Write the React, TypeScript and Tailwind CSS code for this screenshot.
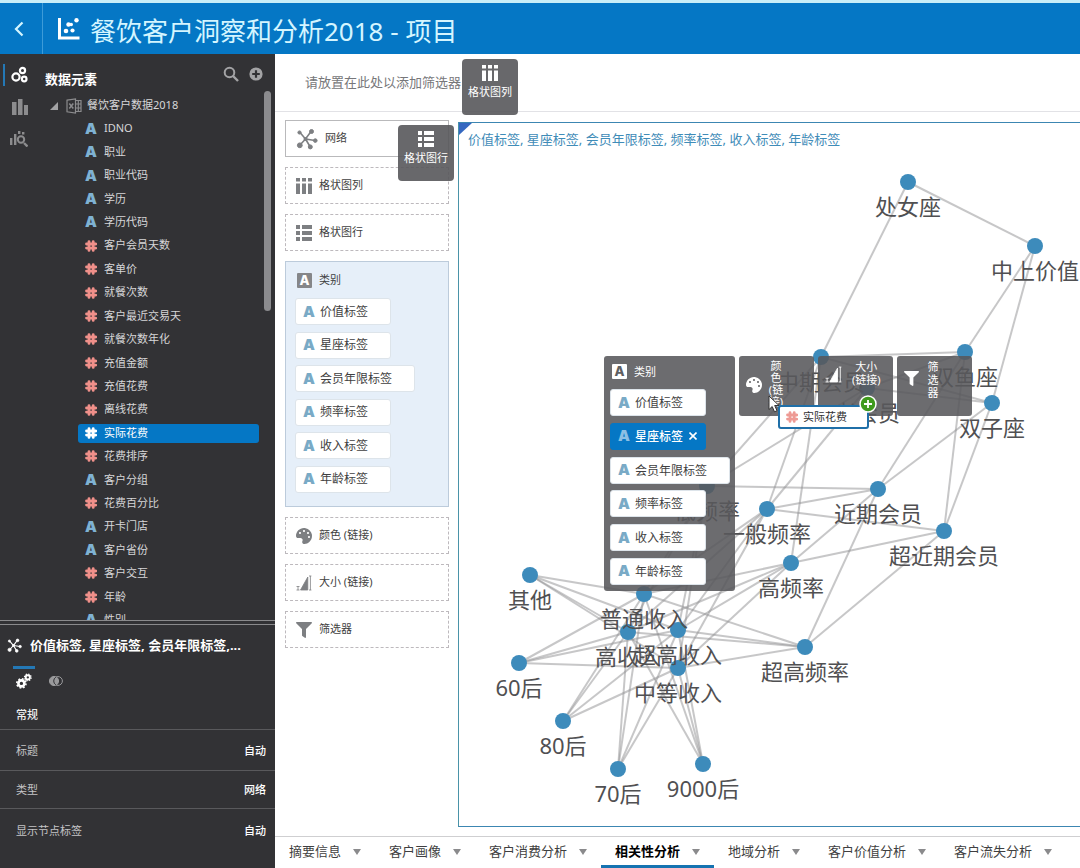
import { useState } from 'react'
import type { ReactNode } from 'react'
import { FaFilter, FaPalette } from 'react-icons/fa'

type FieldKind = 'text' | 'number'

interface Field {
  name: string
  kind: FieldKind
}

interface GraphNode {
  name: string
  x: number
  y: number
}

const FIELDS: Field[] = [
  { name: 'IDNO', kind: 'text' },
  { name: '职业', kind: 'text' },
  { name: '职业代码', kind: 'text' },
  { name: '学历', kind: 'text' },
  { name: '学历代码', kind: 'text' },
  { name: '客户会员天数', kind: 'number' },
  { name: '客单价', kind: 'number' },
  { name: '就餐次数', kind: 'number' },
  { name: '客户最近交易天', kind: 'number' },
  { name: '就餐次数年化', kind: 'number' },
  { name: '充值金额', kind: 'number' },
  { name: '充值花费', kind: 'number' },
  { name: '离线花费', kind: 'number' },
  { name: '实际花费', kind: 'number' },
  { name: '花费排序', kind: 'number' },
  { name: '客户分组', kind: 'text' },
  { name: '花费百分比', kind: 'number' },
  { name: '开卡门店', kind: 'text' },
  { name: '客户省份', kind: 'text' },
  { name: '客户交互', kind: 'number' },
  { name: '年龄', kind: 'number' },
  { name: '性别', kind: 'text' },
]

const LABELS = ['价值标签', '星座标签', '会员年限标签', '频率标签', '收入标签', '年龄标签']

const TABS = ['摘要信息', '客户画像', '客户消费分析', '相关性分析', '地域分析', '客户价值分析', '客户流失分析']

const SETTINGS = [
  { label: '标题', value: '自动', size: 'h-[41px]' },
  { label: '类型', value: '网络', size: 'h-[38px]' },
  { label: '显示节点标签', value: '自动', size: 'h-[42px]' },
]

const NODES: GraphNode[] = [
  { name: '处女座', x: 449, y: 59 },
  { name: '中上价值', x: 576, y: 123 },
  { name: '中期会员', x: 362, y: 234 },
  { name: '双鱼座', x: 506, y: 229 },
  { name: '老会员', x: 408, y: 265 },
  { name: '双子座', x: 533, y: 280 },
  { name: '低频率', x: 248, y: 363 },
  { name: '近期会员', x: 419, y: 366 },
  { name: '一般频率', x: 308, y: 386 },
  { name: '超近期会员', x: 485, y: 408 },
  { name: '高频率', x: 332, y: 440 },
  { name: '其他', x: 71, y: 452 },
  { name: '普通收入', x: 185, y: 471 },
  { name: '高收入', x: 169, y: 509 },
  { name: '超高收入', x: 219, y: 507 },
  { name: '中等收入', x: 219, y: 545 },
  { name: '超高频率', x: 346, y: 524 },
  { name: '60后', x: 60, y: 540 },
  { name: '80后', x: 104, y: 598 },
  { name: '70后', x: 159, y: 646 },
  { name: '9000后', x: 244, y: 641 },
]

// 每个节点连接到的其他节点
const INCOMES = ['普通收入', '高收入', '超高收入', '中等收入']
const LINKS: Record<string, string[]> = {
  处女座: ['中上价值', '中期会员'],
  中上价值: ['双鱼座', '双子座'],
  双鱼座: ['中期会员', '老会员', '近期会员', '超近期会员'],
  双子座: ['中期会员', '老会员', '近期会员', '超近期会员'],
  中期会员: ['低频率', '一般频率', '高频率'],
  老会员: ['低频率', '一般频率'],
  近期会员: ['低频率', '一般频率', '高频率', '超高频率'],
  超近期会员: ['一般频率', '高频率', '超高频率'],
  低频率: INCOMES,
  一般频率: INCOMES,
  高频率: INCOMES,
  超高频率: INCOMES,
  其他: INCOMES,
  '60后': INCOMES,
  '80后': INCOMES,
  '70后': INCOMES,
  '9000后': INCOMES,
}

function HashIcon({ className }: { className: string }) {
  return (
    <svg viewBox="0 0 12 12" className={`size-3 shrink-0 ${className}`} stroke="currentColor" strokeWidth="2.8" strokeLinecap="round" fill="none">
      <path d="M4 1.6V10.4M8.2 1.6V10.4M1.5 4H10.7M1.5 8.1H10.7" />
    </svg>
  )
}

function LetterIcon({ className }: { className: string }) {
  return (
    <span aria-hidden="true" className={`w-3 shrink-0 text-center font-[Inter,sans-serif] text-[15px] leading-4 font-black ${className}`}>A</span>
  )
}

function BoxedLetter({ className }: { className: string }) {
  return (
    <span aria-hidden="true" className={`flex size-[15px] shrink-0 items-center justify-center rounded-[1px] font-[Inter,sans-serif] text-[13px] leading-none font-extrabold ${className}`}>A</span>
  )
}

function NetworkIcon({ className }: { className: string }) {
  return (
    <svg viewBox="0 0 22 22" className={className} stroke="currentColor" fill="currentColor">
      <path d="M4 4.5 9.5 11 15 3.5M9.5 11 19 12.5M9.5 11 4 17M9.5 11 14 18.5" fill="none" strokeWidth="1.6" />
      <circle cx="3.5" cy="4.5" r="1.6" />
      <circle cx="15.5" cy="3.5" r="2" />
      <circle cx="19.3" cy="12.6" r="1.8" />
      <circle cx="3.8" cy="17.3" r="2.4" />
      <circle cx="14.3" cy="18.9" r="2" />
      <circle cx="9.5" cy="11" r="1.5" />
    </svg>
  )
}

function TrellisColumnsIcon({ className }: { className: string }) {
  return (
    <svg viewBox="0 0 16 16" className={className} fill="currentColor">
      <path d="M0 0h4v3.5H0zM6 0h4v3.5H6zM12 0h4v3.5h-4zM0 5.5h4V16H0zM6 5.5h4V16H6zM12 5.5h4V16h-4z" />
    </svg>
  )
}

function TrellisRowsIcon({ className }: { className: string }) {
  return (
    <svg viewBox="0 0 16 16" className={className} fill="currentColor">
      <path d="M0 0h4v4H0zM0 6h4v4H0zM0 12h4v4H0zM6 0h10v4H6zM6 6h10v4H6zM6 12h10v4H6z" />
    </svg>
  )
}

function SizeIcon({ className }: { className: string }) {
  return (
    <svg viewBox="0 0 16 16" className={className} fill="currentColor" stroke="currentColor">
      <path d="M4.5 15 11.8 2v13z" strokeWidth="0.8" />
      <path d="M0.5 11.5h3M0.5 15h3M2 11.5V15M13 1h2.4M13 15h2.4M14.4 1v14" fill="none" strokeWidth="0.8" />
    </svg>
  )
}

function GearsIcon() {
  return (
    <svg viewBox="0 0 16 16" className="size-4" fill="none" stroke="currentColor">
      <circle cx="5.4" cy="10.4" r="3" strokeWidth="2.6" />
      <circle cx="5.4" cy="10.4" r="4.6" strokeWidth="1.6" strokeDasharray="1.8 1.8" />
      <circle cx="11.8" cy="4.4" r="2.1" strokeWidth="1.9" />
      <circle cx="11.8" cy="4.4" r="3.3" strokeWidth="1.3" strokeDasharray="1.3 1.3" />
    </svg>
  )
}

function Header() {
  return (
    <header className="flex h-[54px] shrink-0 border-t-3 border-[#c9eef8] bg-[#0577c5] text-[#d4f5ff]">
      <button aria-label="返回" className="flex w-[43px] items-center justify-center border-r border-[#3d9bd8] pr-1">
        <svg viewBox="0 0 10 16" className="h-4 w-2.5" fill="none" stroke="currentColor" strokeWidth="2.2">
          <path d="M8.5 1.5 2 8l6.5 6.5" />
        </svg>
      </button>
      <div className="flex items-center gap-2.5 pl-[15px]">
        <svg viewBox="0 0 22 22" className="size-[22px] text-white" fill="currentColor">
          <path d="M0 0h3v18.5h18.5v3H0z" />
          <circle cx="8" cy="13" r="2.3" />
          <circle cx="10.5" cy="6.5" r="2.2" />
          <circle cx="14.5" cy="12.5" r="2.1" />
          <circle cx="13.2" cy="6.5" r="1.8" />
          <circle cx="18.5" cy="2.3" r="2.2" />
        </svg>
        <h1 className="pt-1 text-[26px] leading-none font-normal whitespace-nowrap">餐饮客户洞察和分析2018 - 项目</h1>
      </div>
    </header>
  )
}

function Rail() {
  return (
    <nav className="flex w-10 shrink-0 flex-col gap-2.5 pt-2.5 text-[#8c8c8e]">
      <button aria-label="数据" className="ml-[3px] flex h-[22px] items-center border-l-2 border-[#2478b5] pl-1.5 text-white">
        <svg viewBox="0 0 18 18" className="size-[18px]" fill="none" stroke="currentColor" strokeWidth="2.2">
          <circle cx="5" cy="11" r="3.6" />
          <circle cx="11.5" cy="4.5" r="2.6" />
          <circle cx="13.2" cy="13" r="2.3" />
        </svg>
      </button>
      <button aria-label="可视化" className="flex h-[22px] items-center pl-3">
        <svg viewBox="0 0 16 16" className="size-4" fill="currentColor">
          <path d="M0 3h4.5v13H0zM6 0h4.5v16H6zM12 6h4v10h-4z" />
        </svg>
      </button>
      <button aria-label="分析" className="flex h-[22px] items-center pl-2.5">
        <svg viewBox="0 0 18 16" className="h-4 w-[18px]" fill="currentColor">
          <path d="M0 7h2.4v7H0zM4 3h2.4v11H4zM8 0h2.4v3H8zM12 1h2.4v2.5H12z" />
          <circle cx="11" cy="8.5" r="3.2" fill="none" stroke="currentColor" strokeWidth="2" />
          <path d="m14 12 3.5 3.5" stroke="currentColor" strokeWidth="2.4" />
        </svg>
      </button>
    </nav>
  )
}

function DataPanel() {
  const [selected, setSelected] = useState('实际花费')

  return (
    <section className="flex min-h-0 flex-1 border-b border-[#8a8a8c]">
      <Rail />
      <div className="flex min-w-0 flex-1 flex-col">
        <div className="flex h-10 shrink-0 items-center pr-3 pl-[5px]">
          <h2 className="flex-1 pt-2.5 text-[13px] leading-4 font-bold text-white">数据元素</h2>
          <button aria-label="搜索" className="mr-2.5 text-[#a3a3a5]">
            <svg viewBox="0 0 16 16" className="size-4" fill="none" stroke="currentColor">
              <circle cx="6.5" cy="6.5" r="4.8" strokeWidth="2" />
              <path d="m10 10 5 5" strokeWidth="2.4" />
            </svg>
          </button>
          <button aria-label="添加" className="text-[#a3a3a5]">
            <svg viewBox="0 0 14 14" className="size-3.5">
              <circle cx="7" cy="7" r="6.6" fill="currentColor" />
              <path d="M7 3.2v7.6M3.2 7h7.6" stroke="#323235" strokeWidth="2.2" />
            </svg>
          </button>
        </div>
        <div className="flex min-h-0 flex-1">
          <div className="min-w-0 flex-1 overflow-hidden">
            <div className="flex h-[23px] items-center pl-2.5 text-[11px] text-[#d6d6d8]">
              <svg viewBox="0 0 8 8" className="size-2" fill="#a3a3a5">
                <path d="M8 0v8H0z" />
              </svg>
              <svg viewBox="0 0 16 16" className="ml-2 mr-[5px] size-4" fill="none" stroke="#8c8c8e" strokeWidth="1.2">
                <path d="M1 2.2 9.5 1v14L1 13.8zM9.5 2.5H15v11H9.5M9.5 6H15M9.5 10H15M12.3 2.5v11" />
                <path d="m3.3 5.5 4 5M7.3 5.5l-4 5" strokeWidth="1.5" />
              </svg>
              餐饮客户数据2018
            </div>
            <ul className="grid h-[515px] auto-rows-fr pl-[38px]">
              {FIELDS.map((field) => {
                const active = field.name === selected
                return (
                  <li key={field.name} className="flex items-center">
                    <button
                      onClick={() => setSelected(field.name)}
                      className={`flex h-[19px] w-full items-center gap-[7px] rounded-[3px] pl-[7px] text-[11px] ${active ? 'bg-[#0577c5] text-white' : 'text-[#d6d6d8]'}`}
                    >
                      {field.kind === 'text' ? (
                        <LetterIcon className="text-[#7fb2d3]" />
                      ) : (
                        <HashIcon className={active ? 'text-white' : 'text-[#f0908a]'} />
                      )}
                      {field.name}
                    </button>
                  </li>
                )
              })}
            </ul>
          </div>
          <div className="w-4 shrink-0 pl-[5px]">
            <div className="mt-[-3px] h-[220px] w-[7px] rounded-full bg-[#8b8b8e]" />
          </div>
        </div>
      </div>
    </section>
  )
}

function PropertyPanel() {
  return (
    <section className="mt-[3px] h-[244px] shrink-0 border-t border-[#8a8a8c]">
      <div className="flex h-[41px] items-center gap-2 pl-[7px] text-white">
        <NetworkIcon className="size-[15px]" />
        <h2 className="text-[13px] font-bold whitespace-nowrap">价值标签, 星座标签, 会员年限标签,...</h2>
      </div>
      <div className="flex h-[26px] gap-2.5 pl-[13px]">
        <button aria-label="常规设置" className="flex w-[22px] items-center justify-center border-t-3 border-[#2478b5] text-white">
          <GearsIcon />
        </button>
        <button aria-label="混合设置" className="flex w-[22px] items-center justify-center pt-[3px] text-[#9a9a9c]">
          <svg viewBox="0 0 14 12" className="h-3 w-3.5" fill="none" stroke="currentColor">
            <circle cx="5" cy="6" r="4.6" fill="currentColor" />
            <circle cx="9" cy="6" r="4.4" />
            <path d="M6.8 2.2a4.5 4.5 0 0 0 0 7.6" stroke="#323235" />
          </svg>
        </button>
      </div>
      <h3 className="flex h-[38px] items-center border-b border-[#59595c] px-4 pt-2.5 text-[11px] font-medium text-[#efeff0]">常规</h3>
      <dl className="divide-y divide-[#59595c] text-[11px]">
        {SETTINGS.map((item) => (
          <div key={item.label} className={`flex items-center justify-between pt-0.5 pr-[9px] pl-4 ${item.size}`}>
            <dt className="text-[#c4c4c6]">{item.label}</dt>
            <dd className="font-medium text-white">{item.value}</dd>
          </div>
        ))}
      </dl>
    </section>
  )
}

function DropZone({ icon, label, solid }: { icon: ReactNode; label: string; solid?: boolean }) {
  return (
    <div className={`flex h-[37px] shrink-0 items-center gap-[7px] border pl-2.5 text-[11px] text-[#3f3f41] ${solid ? 'border-[#b9b9bb]' : 'border-dashed border-[#bdb9bd]'}`}>
      {icon}
      {label}
    </div>
  )
}

function Chip({ label, active }: { label: string; active?: boolean }) {
  return (
    <li
      className={`flex h-[27px] items-center gap-[5px] rounded-[3px] border pl-[7px] text-[12px] whitespace-nowrap ${
        active ? 'border-[#0577c5] bg-[#0577c5] pr-2 font-medium text-white' : 'border-[#dde4ea] bg-white pr-[22px] text-[#3f3f41]'
      }`}
    >
      <LetterIcon className={active ? 'text-[#8cc0e4]' : 'text-[#79aac6]'} />
      {label}
      {active && (
        <button aria-label="移除" className="ml-px">
          <svg viewBox="0 0 8 8" className="size-2" stroke="currentColor" strokeWidth="1.6">
            <path d="m0.5 0.5 7 7M7.5 0.5l-7 7" />
          </svg>
        </button>
      )}
    </li>
  )
}

function GrammarPanel() {
  return (
    <section className="flex w-[183px] shrink-0 flex-col gap-2.5 pt-2 pr-[9px] pl-2.5">
      <DropZone solid icon={<NetworkIcon className="size-[22px] text-[#7d7f82]" />} label="网络" />
      <DropZone icon={<TrellisColumnsIcon className="size-4 text-[#7d7f82]" />} label="格状图列" />
      <DropZone icon={<TrellisRowsIcon className="size-4 text-[#7d7f82]" />} label="格状图行" />
      <div className="h-[246px] shrink-0 border border-[#bccbdb] bg-[#e6eff9] px-[9px]">
        <h3 className="flex h-9 items-center gap-[7px] pl-0.5 text-[11px] text-[#3f3f41]">
          <BoxedLetter className="bg-[#858689] text-white" />
          类别
        </h3>
        <ul className="flex h-[195px] flex-col items-start justify-between">
          {LABELS.map((label) => <Chip key={label} label={label} />)}
        </ul>
      </div>
      <DropZone icon={<FaPalette className="size-4 -scale-x-100 text-[#7d7f82]" />} label="颜色 (链接)" />
      <DropZone icon={<SizeIcon className="size-4 text-[#7d7f82]" />} label="大小 (链接)" />
      <DropZone icon={<FaFilter className="size-4 text-[#7d7f82]" />} label="筛选器" />
    </section>
  )
}

function NetworkChart() {
  const find = (name: string) => NODES.find((node) => node.name === name)!

  return (
    <svg className="absolute inset-0 h-full w-full">
      <g stroke="#8f8f91" strokeOpacity="0.5" strokeWidth="2">
        {Object.entries(LINKS).map(([from, targets]) =>
          targets.map((to) => (
            <line key={from + to} x1={find(from).x} y1={find(from).y} x2={find(to).x} y2={find(to).y} />
          ))
        )}
      </g>
      <g fill="#3d8bbb">
        {NODES.map((node) => <circle key={node.name} cx={node.x} cy={node.y} r="8" />)}
      </g>
      <g fill="#505052" fontSize="22" textAnchor="middle">
        {NODES.map((node) => <text key={node.name} x={node.x} y={node.y + 33}>{node.name}</text>)}
      </g>
    </svg>
  )
}

// 拖动字段时显示在图表上方的放置目标
function DropTargets() {
  return (
    <div className="absolute top-[233px] left-[145px] flex items-start gap-1 text-[11px] leading-[13px] text-white">
      <div className="h-[235px] w-[131px] rounded-[3px] bg-[#58585b]/88 pr-[5px] pl-1.5">
        <h3 className="flex h-[33px] items-center gap-[7px] pb-[3px] pl-0.5">
          <BoxedLetter className="bg-white text-[#5f5f62]" />
          类别
        </h3>
        <ul className="flex h-[196px] flex-col items-start justify-between">
          {LABELS.map((label) => <Chip key={label} label={label} active={label === '星座标签'} />)}
        </ul>
      </div>
      <div className="flex h-[60px] w-[75px] gap-1.5 rounded-[3px] bg-[#58585b]/88 pt-1 pl-[7px]">
        <FaPalette className="mt-[17px] size-4 -scale-x-100" />
        <p className="w-4 text-center leading-3 whitespace-nowrap">颜<br />色<br />(链<br />接)</p>
      </div>
      <div className="flex h-[60px] w-[75px] gap-2.5 rounded-[3px] bg-[#58585b]/88 pt-1 pl-[7px]">
        <SizeIcon className="mt-1.5 size-[17px]" />
        <p className="text-center whitespace-nowrap">大小<br />(链接)</p>
      </div>
      <div className="flex h-[60px] w-[75px] gap-2 rounded-[3px] bg-[#58585b]/88 pt-1 pl-[7px]">
        <FaFilter className="mt-[11px] size-[15px]" />
        <p className="w-3 text-center">筛选器</p>
      </div>
    </div>
  )
}

function DraggedField() {
  return (
    <>
      <div className="absolute top-[282px] left-[319px] flex h-6 w-[91px] items-center gap-[5px] rounded-[3px] border-2 border-[#1f6fa8] bg-white pl-1.5 text-[11px] text-[#2f2f31]">
        <HashIcon className="text-[#ee9a94]" />
        实际花费
        <svg viewBox="0 0 18 18" className="absolute -top-3 -right-2.5 size-[18px]">
          <circle cx="9" cy="9" r="8" fill="#3f9a1d" stroke="#fff" strokeWidth="1.5" />
          <path d="M9 5v8M5 9h8" stroke="#fff" strokeWidth="1.8" />
        </svg>
      </div>
      <svg viewBox="0 0 12 18" className="absolute top-[272px] left-[309px] h-[18px] w-3">
        <path d="M1 1v13.5l3.2-3 2.3 5.3 2.5-1.1-2.3-5.2H11z" fill="#fff" stroke="#333" strokeWidth="1" />
      </svg>
    </>
  )
}

function Canvas() {
  return (
    <section className="relative mt-2.5 mb-[9px] min-w-0 flex-1 overflow-hidden border border-r-0 border-[#3c86b2] border-l-[#4a93a8]">
      <svg viewBox="0 0 13 12" className="absolute top-0 left-0 h-3 w-[13px]" fill="#3568c0">
        <path d="M0 0h13L0 12z" />
      </svg>
      <h2 className="pt-1.5 pl-[9px] text-[13px] leading-5 whitespace-nowrap text-[#3f8cb8]">
        价值标签, 星座标签, 会员年限标签, 频率标签, 收入标签, 年龄标签
      </h2>
      <NetworkChart />
      <DropTargets />
      <DraggedField />
    </section>
  )
}

function Tile({ icon, label, className }: { icon: ReactNode; label: string; className: string }) {
  return (
    <div className={`absolute flex size-14 flex-col items-center gap-1 rounded bg-[#58585b]/90 pt-1.5 text-[11px] leading-[14px] text-white ${className}`}>
      {icon}
      {label}
    </div>
  )
}

function TabBar() {
  const [current, setCurrent] = useState('相关性分析')

  return (
    <nav className="flex h-8 shrink-0 overflow-hidden border-t border-[#cfcfd1]">
      {TABS.map((tab) => (
        <button
          key={tab}
          onClick={() => setCurrent(tab)}
          className={`flex shrink-0 items-center gap-3 border-b-3 px-3.5 pt-0.5 text-[13px] whitespace-nowrap ${
            tab === current ? 'border-[#1673b1] font-bold text-black' : 'border-transparent text-[#3f3f41]'
          }`}
        >
          {tab}
          <svg viewBox="0 0 8 6" className="h-1.5 w-2" fill="#8a8a8c">
            <path d="M0 0h8L4 6z" />
          </svg>
        </button>
      ))}
    </nav>
  )
}

export default function App() {
  return (
    <div className="flex h-screen flex-col overflow-hidden bg-white font-['Noto_Sans','Noto_Sans_CJK_SC',sans-serif]">
      <Header />
      <div className="flex min-h-0 flex-1">
        <aside className="flex w-[275px] shrink-0 flex-col bg-[#323235]">
          <DataPanel />
          <PropertyPanel />
        </aside>
        <main className="relative flex min-w-0 flex-1 flex-col">
          <div className="flex h-[58px] shrink-0 items-center border-b border-[#e2e2e6] pl-[30px] text-[13px] text-[#77777a]">
            请放置在此处以添加筛选器
          </div>
          <div className="flex min-h-0 flex-1">
            <GrammarPanel />
            <Canvas />
          </div>
          <TabBar />
          <Tile className="top-[5px] left-[187px]" icon={<TrellisColumnsIcon className="size-4" />} label="格状图列" />
          <Tile className="top-[71px] left-[123px]" icon={<TrellisRowsIcon className="size-4" />} label="格状图行" />
        </main>
      </div>
    </div>
  )
}
